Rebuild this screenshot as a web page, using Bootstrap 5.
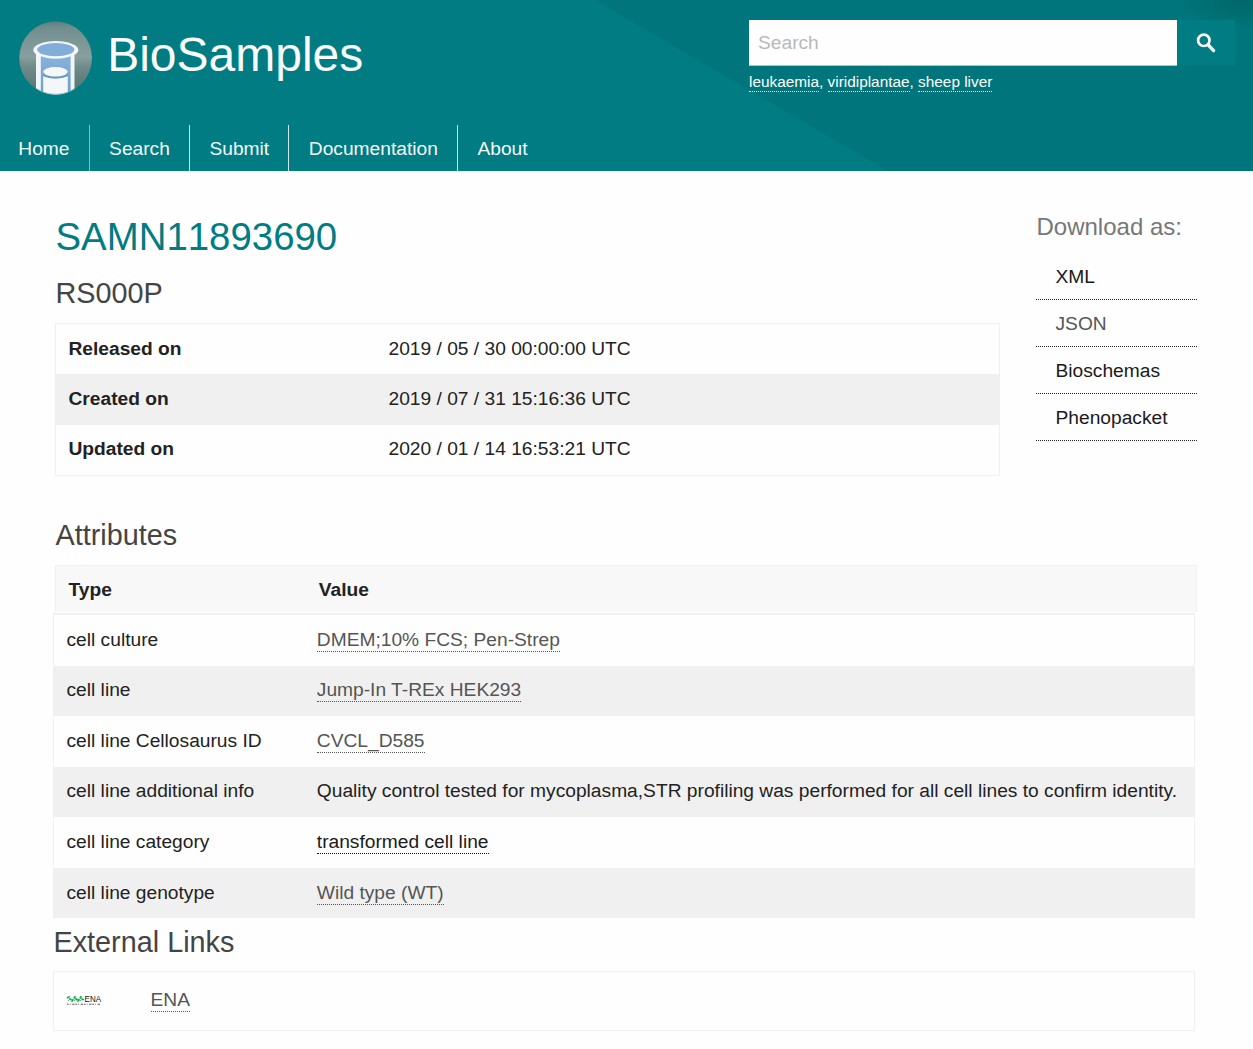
<!DOCTYPE html>
<html lang="en">
<head>
<meta charset="utf-8">
<meta name="viewport" content="width=device-width, initial-scale=1">
<title>BioSamples - SAMN11893690</title>
<link href="https://cdn.jsdelivr.net/npm/bootstrap@5.3.0/dist/css/bootstrap.min.css" rel="stylesheet">
<style>
body{font-family:"Liberation Sans",Arial,sans-serif;font-size:19.2px;line-height:24px;color:#222;background:#fefefe;height:1049px;overflow:hidden}
a{color:#555;text-decoration:none}
.masthead{height:171px;background:#007c82;isolation:isolate}
.masthead::before{content:"";position:absolute;inset:0;z-index:-1;clip-path:polygon(595px 0,100% 0,100% 100%,888px 100%);background:radial-gradient(ellipse 60px 28px at 1240px 0,#00686c 0,#006b6f 35%,transparent 100%),#00757b}
.brand-row{height:125px;padding:20px 18px 0}
.brand-logo{width:75px;height:75px;margin-top:1px}
.brand-name{font-size:48px;line-height:60px;color:#fafafa;margin:5px 0 0 14.2px;font-weight:400}
.search-area{width:486px}
.search-box{width:428px;height:46px;border:0;border-bottom:1px solid #bdbdbd;border-radius:0;padding:0 9px;font-size:19.2px;color:#222;background:#fefefe}
.search-box::placeholder{color:#b9b9b9;opacity:1}
.search-go{width:58px;height:46px;border:0;border-radius:0;background:#007c82;padding:0}
.examples{font-size:15.36px;line-height:19px;color:#fff;margin-top:6px}
.examples a,.dotted{border-bottom:1px dotted currentColor}
.examples a{color:#fff;display:inline-block;line-height:19px}
.main-menu .nav-link{height:46px;padding:12px 19.3px 10px;line-height:24px;color:#f4f9f9;border-right:1px solid #cdeaea}
.main-menu .nav-link.first-item{padding-left:18.3px;border-color:#7fc0c2}
.main-menu .nav-item:last-child .nav-link{border-right:0}
.page-body{padding:41px 56px 0 55px}
.overview{width:945px}
.accession{font-size:38.4px;line-height:50px;color:#007c82;font-weight:400;margin:0;padding-left:.5px;font-kerning:none}
.section-title{font-size:28.8px;line-height:40px;color:#444;font-weight:400;margin:0;padding-left:.5px}
.sample-name{margin:11px 0 10px}
.attr-title{margin:39px 0 10px}
.ext-title{margin:4px 0 9px}
.data-table{table-layout:fixed;margin:0;border:1px solid #f0f0f0;border-collapse:separate;border-spacing:0;color:#222}
.data-table>tbody>tr>*{border:0;padding:0 12.5px 2px;height:50.4px;vertical-align:middle;white-space:nowrap;color:#222;background:transparent;box-shadow:none}
.data-table>tbody>tr:nth-of-type(even)>*{background:#f0f0f0}
.data-table>tbody>tr.low>*{padding-bottom:0}
.download{width:161px}
.download h4{font-size:24px;line-height:30px;color:#777;font-weight:400;margin:0 0 11px;padding-left:.5px;white-space:nowrap}
.download a{height:47px;padding:12px 19.5px 0;border-bottom:1px dotted #222}
.download .ink,.ink{color:#1a1a1a}
.table-head{height:47px;border:1px solid #f0f0f0;border-bottom:0;background:#f8f8f8;padding:1px 12.5px 0}
.table-head div:first-child{width:250.3px}
.shifted{margin-left:-2px;width:1142px}
.attr-table{margin-top:1px;border-top-width:2px;border-bottom-width:0}
.attr-table>tbody>tr>*{height:50.5px}
.dotted{display:inline-block;line-height:23px}
.ext-links{height:60px;border:1px solid #f0f0f0;padding:0 12px 1px}
.ena-mark{width:36px;height:12px}
.ena-link{margin:0 0 1px 48.5px}
</style>
<script src="https://cdn.jsdelivr.net/npm/bootstrap@5.3.0/dist/js/bootstrap.bundle.min.js"></script>
</head>
<body>
<header class="masthead position-relative">
  <div class="brand-row d-flex justify-content-between align-items-start">
    <div class="d-flex">
      <svg class="brand-logo" viewBox="0 0 75 75" aria-hidden="true">
        <defs>
          <linearGradient id="disc" x1="0" y1="0" x2="0" y2="1"><stop offset="0" stop-color="#5d7e7e"/><stop offset=".08" stop-color="#718e8e"/><stop offset=".48" stop-color="#87a09f"/><stop offset=".62" stop-color="#6e8b8a"/><stop offset="1" stop-color="#56716f"/></linearGradient>
          <linearGradient id="glass" x1="0" y1="0" x2="0" y2="1"><stop offset="0" stop-color="#88b2dc"/><stop offset="1" stop-color="#6a9ecb"/></linearGradient>
          <clipPath id="round"><circle cx="37.6" cy="37" r="36.5"/></clipPath>
        </defs>
        <g clip-path="url(#round)">
          <circle cx="37.6" cy="37" r="36.5" fill="url(#disc)"/>
          <path d="M18 30H56.5V75H18z" fill="#f3f6f9"/>
          <path d="M22.8 34H52.6V75H22.8z" fill="url(#glass)"/>
          <ellipse cx="37.8" cy="28.9" rx="22.5" ry="8.8" fill="#f3f6f9"/>
          <ellipse cx="37.8" cy="28.6" rx="18.6" ry="6.6" fill="#82add8"/>
          <path d="M25.2 55Q37.5 60 49.8 55V75H25.2z" fill="#f5f6f8"/>
          <path d="M25.2 51V55Q37.5 60 49.8 55V51z" fill="#659ac8"/>
          <ellipse cx="37.5" cy="50.8" rx="12.2" ry="4.8" fill="#f5f6f8"/>
        </g>
        <circle cx="37.6" cy="37" r="36.2" fill="none" stroke="#5b9292" stroke-opacity=".5" stroke-width=".8"/>
      </svg>
      <h1 class="brand-name">BioSamples</h1>
    </div>
    <form class="search-area">
      <div class="d-flex">
        <input class="form-control search-box" type="text" placeholder="Search" aria-label="Search">
        <button class="search-go d-flex align-items-center justify-content-center" type="button" aria-label="Search">
          <svg width="20" height="20" viewBox="0 0 20 20" fill="none" stroke="#fff"><circle cx="7.8" cy="7.3" r="5.7" stroke-width="2.7"/><path d="M12.2 11.8L17.6 17.6" stroke-width="3.3" stroke-linecap="round"/></svg>
        </button>
      </div>
      <div class="examples"><a href="#">leukaemia</a>, <a href="#">viridiplantae</a>, <a href="#">sheep liver</a></div>
    </form>
  </div>
  <nav>
    <ul class="nav main-menu">
      <li class="nav-item"><a class="nav-link first-item" href="#">Home</a></li>
      <li class="nav-item"><a class="nav-link" href="#">Search</a></li>
      <li class="nav-item"><a class="nav-link" href="#">Submit</a></li>
      <li class="nav-item"><a class="nav-link" href="#">Documentation</a></li>
      <li class="nav-item"><a class="nav-link" href="#">About</a></li>
    </ul>
  </nav>
</header>
<main class="page-body">
  <div class="d-flex justify-content-between align-items-start">
    <section class="overview">
      <h2 class="accession">SAMN11893690</h2>
      <h3 class="section-title sample-name">RS000P</h3>
      <table class="table data-table">
        <colgroup><col style="width:320px"><col></colgroup>
        <tbody>
          <tr class="low"><th>Released on</th><td>2019 / 05 / 30 00:00:00 UTC</td></tr>
          <tr><th>Created on</th><td>2019 / 07 / 31 15:16:36 UTC</td></tr>
          <tr><th>Updated on</th><td>2020 / 01 / 14 16:53:21 UTC</td></tr>
        </tbody>
      </table>
    </section>
    <aside class="download">
      <h4>Download as:</h4>
      <a class="d-block ink" href="#">XML</a>
      <a class="d-block" href="#">JSON</a>
      <a class="d-block ink" href="#">Bioschemas</a>
      <a class="d-block ink" href="#">Phenopacket</a>
    </aside>
  </div>
  <section>
    <h3 class="section-title attr-title">Attributes</h3>
    <div class="table-head d-flex align-items-center fw-bold"><div>Type</div><div>Value</div></div>
    <table class="table data-table attr-table shifted">
      <colgroup><col style="width:250.3px"><col></colgroup>
      <tbody>
        <tr class="low"><td>cell culture</td><td><a class="dotted" href="#">DMEM;10% FCS; Pen-Strep</a></td></tr>
        <tr><td>cell line</td><td><a class="dotted" href="#">Jump-In T-REx HEK293</a></td></tr>
        <tr class="low"><td>cell line Cellosaurus ID</td><td><a class="dotted" href="#">CVCL_D585</a></td></tr>
        <tr><td>cell line additional info</td><td>Quality control tested for mycoplasma,STR profiling was performed for all cell lines to confirm identity.</td></tr>
        <tr class="low"><td>cell line category</td><td><a class="dotted ink" href="#">transformed cell line</a></td></tr>
        <tr class="low"><td>cell line genotype</td><td><a class="dotted" href="#">Wild type (WT)</a></td></tr>
      </tbody>
    </table>
  </section>
  <section class="shifted">
    <h3 class="section-title ext-title">External Links</h3>
    <div class="ext-links d-flex align-items-center">
      <svg class="ena-mark" viewBox="0 0 36 12" role="img" aria-label="ENA">
        <path d="M1 3L3 2L6 6L9 2L12 6L15 2L18 6" fill="none" stroke="#19a653" stroke-width="1.8" stroke-dasharray="2.6 .8"/>
        <path d="M2 6L5 3M8 6L11 3M14 6L17 3" fill="none" stroke="#55bf80" stroke-width="1"/>
        <text x="18.6" y="7.4" font-family="Liberation Sans, sans-serif" font-size="8.2" textLength="16.5" lengthAdjust="spacingAndGlyphs" fill="#111">ENA</text>
        <path d="M1 9.3H35" stroke="#555" stroke-width="1.1" stroke-dasharray="1.6 1.2 .8 1.6 2.4 .9"/>
      </svg>
      <a class="dotted ena-link" href="#">ENA</a>
    </div>
  </section>
</main>
</body>
</html>
